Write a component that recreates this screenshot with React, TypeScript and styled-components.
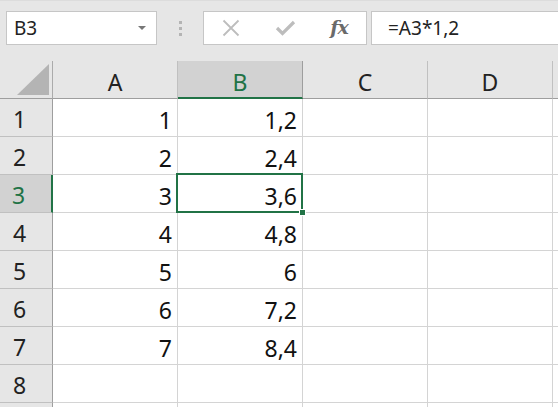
import * as React from 'react'
import styled, { createGlobalStyle, css } from 'styled-components'

const GlobalStyle = createGlobalStyle`
  html, body {
    margin: 0;
    padding: 0;
    background: #ffffff;
    overflow: hidden;
  }
  body {
    font-family: "Noto Sans", "Open Sans", sans-serif;
  }
`;

const COLUMNS = ['A', 'B', 'C', 'D'];
// row 9 only peeks in at the bottom edge, its number is out of view
const ROWS = [1, 2, 3, 4, 5, 6, 7, 8, 9];
const LAST_VISIBLE_LABEL = 8;
const VALUES: { [row: number]: [string, string] } = {
  1: ['1', '1,2'],
  2: ['2', '2,4'],
  3: ['3', '3,6'],
  4: ['4', '4,8'],
  5: ['5', '6'],
  6: ['6', '7,2'],
  7: ['7', '8,4'],
};
const SELECTED_COL = 'B';
const SELECTED_ROW = 3;

const GREEN = '#217346';

const Root = styled.div`
  width: 558px;
  height: 407px;
  background: #e6e6e6;
  display: flex;
  flex-direction: column;
  overflow: hidden;
`;

const Toolbar = styled.div`
  height: 61px;
  flex-shrink: 0;
  box-sizing: border-box;
  padding-top: 11px;
  padding-left: 6px;
  display: flex;
  align-items: flex-start;
  border-top: 1px solid #dcdcdc;
`;

const NameBox = styled.div`
  width: 151px;
  height: 34px;
  box-sizing: border-box;
  margin-top: -1px;
  background: #ffffff;
  border: 1px solid #c6c6c6;
  display: flex;
  align-items: center;
  padding: 0 10px 0 7px;
  font-size: 19px;
  color: #222;
`;

const NameText = styled.span`
  flex: 1;
`;

const DropArrow = styled.span`
  width: 0;
  height: 0;
  border-left: 4px solid transparent;
  border-right: 4px solid transparent;
  border-top: 4px solid #777;
`;

const Grip = styled.div`
  width: 3px;
  margin: 9px 21px 0 22px;
  display: flex;
  flex-direction: column;
  gap: 3px;
`;

const GripDot = styled.span`
  width: 3px;
  height: 3px;
  background: #b4b4b4;
`;

const ButtonBox = styled.div`
  width: 164px;
  height: 34px;
  margin-top: -1px;
  box-sizing: border-box;
  background: #ffffff;
  border: 1px solid #c6c6c6;
  display: flex;
  align-items: center;
  gap: 22px;
  padding-left: 11px;
`;

const IconButton = styled.span`
  width: 32px;
  display: flex;
  justify-content: center;
  align-items: center;
`;

const FxText = styled.span`
  font-family: "DejaVu Serif", "Liberation Serif", serif;
  font-style: italic;
  font-weight: bold;
  font-size: 19px;
  color: #6a6a6a;
  letter-spacing: -1px;
  margin-top: -2px;
`;

const FormulaInput = styled.div`
  flex: 1;
  height: 34px;
  margin-top: -1px;
  margin-left: 4px;
  box-sizing: border-box;
  background: #ffffff;
  border: 1px solid #c6c6c6;
  border-right: none;
  display: flex;
  align-items: center;
  padding-left: 16px;
  font-size: 19px;
  color: #222;
`;

const Sheet = styled.div`
  display: grid;
  grid-template-columns: 53px 125px 125px 125px 125px 1fr;
  grid-auto-rows: 38px;
`;

const Corner = styled.div`
  box-sizing: border-box;
  border-right: 1px solid #ababab;
  border-bottom: 1px solid #9e9e9e;
  display: flex;
  align-items: flex-end;
  justify-content: flex-end;
  padding: 0 3px 3px 0;
`;

const ColHeader = styled.div<{ $selected?: boolean }>`
  box-sizing: border-box;
  border-right: 1px solid #c0c0c0;
  border-bottom: 1px solid #9e9e9e;
  display: flex;
  justify-content: center;
  align-items: center;
  padding-top: 5px;
  font-size: 23px;
  color: #222;
  ${(p) => p.$selected && css`
    background: #d2d2d2;
    color: ${GREEN};
    border-right-color: #9e9e9e;
    border-bottom: 2px solid ${GREEN};
    padding-top: 6px;
  `}
`;

const RowHeader = styled.div<{ $selected?: boolean }>`
  box-sizing: border-box;
  border-right: 1px solid #9e9e9e;
  border-bottom: 1px solid #c0c0c0;
  display: flex;
  justify-content: center;
  align-items: center;
  padding-right: 13px;
  padding-top: 3px;
  font-size: 23px;
  color: #222;
  ${(p) => p.$selected && css`
    background: #d2d2d2;
    color: ${GREEN};
    border-right: 2px solid ${GREEN};
    padding-right: 14px;
  `}
`;

const Cell = styled.div<{ $selected?: boolean }>`
  position: relative;
  box-sizing: border-box;
  background: #ffffff;
  border-right: 1px solid #d4d4d4;
  border-bottom: 1px solid #d4d4d4;
  display: flex;
  justify-content: flex-end;
  align-items: center;
  padding: 4px 5px 0 0;
  font-size: 23px;
  color: #111;
  ${(p) => p.$selected && css`
    &::after {
      content: '';
      position: absolute;
      left: -2px;
      top: -2px;
      right: -1px;
      bottom: -1px;
      border: 2px solid ${GREEN};
    }
    &::before {
      content: '';
      position: absolute;
      right: -4px;
      bottom: -4px;
      width: 7px;
      height: 7px;
      background: ${GREEN};
      border: 1px solid #ffffff;
      box-sizing: border-box;
      z-index: 2;
    }
  `}
`;

const CloseIcon = () => (
  <svg width="18" height="18" viewBox="0 0 18 18">
    <path d="M1.5 1.5 L16.5 16.5 M16.5 1.5 L1.5 16.5" stroke="#bdbdbd" strokeWidth="1.8" fill="none" />
  </svg>
);

const CheckIcon = () => (
  <svg width="21" height="18" viewBox="0 0 21 18">
    <path d="M2 9 L7.5 14.5 L19 3" stroke="#bdbdbd" strokeWidth="3.2" fill="none" strokeLinejoin="miter" />
  </svg>
);

const CornerTriangle = () => (
  <svg width="32" height="31" viewBox="0 0 32 31">
    <polygon points="32,0 32,31 0,31" fill="#b4b4b4" />
  </svg>
);

const App: React.FC = () => {
  return (
    <Root>
      <GlobalStyle />
      <Toolbar>
        <NameBox>
          <NameText>B3</NameText>
          <DropArrow />
        </NameBox>
        <Grip>
          <GripDot />
          <GripDot />
          <GripDot />
        </Grip>
        <ButtonBox>
          <IconButton><CloseIcon /></IconButton>
          <IconButton><CheckIcon /></IconButton>
          <IconButton><FxText>fx</FxText></IconButton>
        </ButtonBox>
        <FormulaInput>=A3*1,2</FormulaInput>
      </Toolbar>
      <Sheet>
        <Corner><CornerTriangle /></Corner>
        {COLUMNS.map((c) => (
          <ColHeader key={c} $selected={c === SELECTED_COL}>{c}</ColHeader>
        ))}
        <ColHeader />
        {ROWS.map((r) => (
          <React.Fragment key={r}>
            <RowHeader $selected={r === SELECTED_ROW}>
              {r <= LAST_VISIBLE_LABEL ? r : ''}
            </RowHeader>
            {COLUMNS.map((c, i) => (
              <Cell key={c} $selected={r === SELECTED_ROW && c === SELECTED_COL}>
                {i < 2 && VALUES[r] ? VALUES[r][i] : ''}
              </Cell>
            ))}
            <Cell />
          </React.Fragment>
        ))}
      </Sheet>
    </Root>
  )
}

export default App
